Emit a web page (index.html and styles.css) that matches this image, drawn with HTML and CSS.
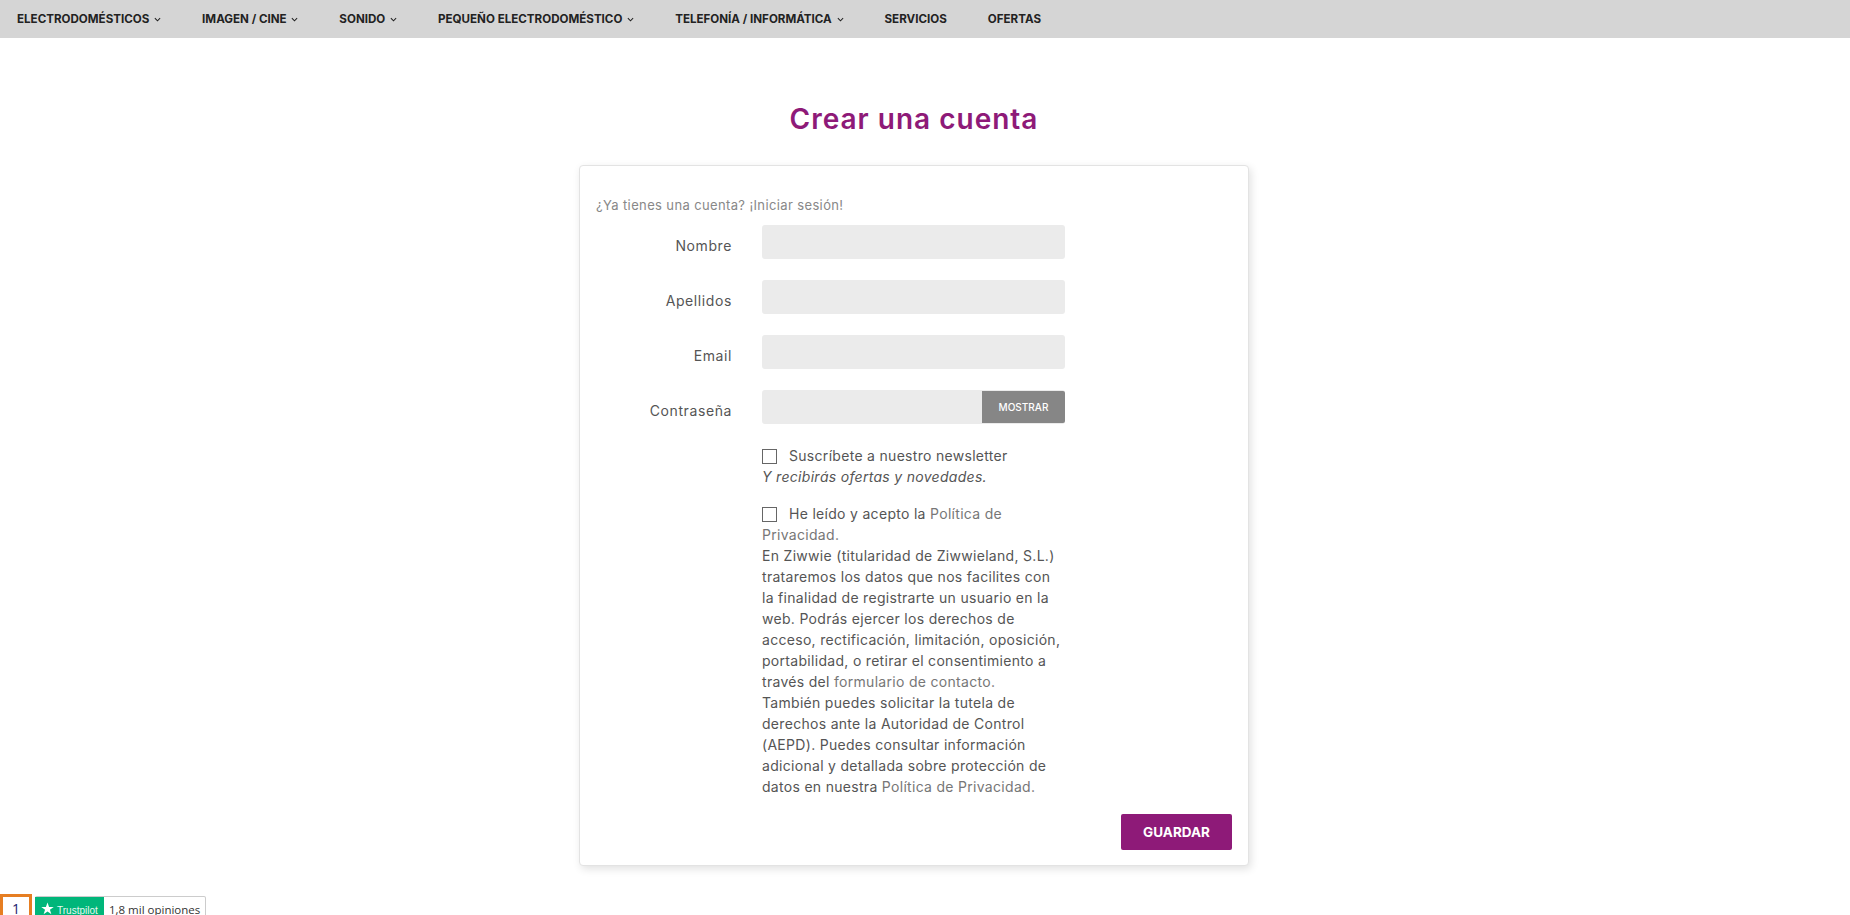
FILE: index.html
```html
<!DOCTYPE html>
<html lang="es">

<head>
    <meta charset="UTF-8">
    <meta name="viewport" content="width=device-width, initial-scale=1.0">
    <title>Crear una cuenta</title>
    <link rel="stylesheet" href="styles.css">
</head>

<body>
    <nav class="topnav">
        <a class="nav-item">ELECTRODOMÉSTICOS <svg class="chev" viewBox="0 0 8 5"><path d="M1 1l3 3 3-3" /></svg></a>
        <a class="nav-item">IMAGEN / CINE <svg class="chev" viewBox="0 0 8 5"><path d="M1 1l3 3 3-3" /></svg></a>
        <a class="nav-item">SONIDO <svg class="chev" viewBox="0 0 8 5"><path d="M1 1l3 3 3-3" /></svg></a>
        <a class="nav-item">PEQUEÑO ELECTRODOMÉSTICO <svg class="chev" viewBox="0 0 8 5"><path d="M1 1l3 3 3-3" /></svg></a>
        <a class="nav-item">TELEFONÍA / INFORMÁTICA <svg class="chev" viewBox="0 0 8 5"><path d="M1 1l3 3 3-3" /></svg></a>
        <a class="nav-item">SERVICIOS</a>
        <a class="nav-item">OFERTAS</a>
    </nav>

    <main class="page">
        <h1 class="title">Crear una cuenta</h1>

        <section class="card">
            <p class="login-link">¿Ya tienes una cuenta? ¡Iniciar sesión!</p>

            <div class="form-row">
                <label class="form-label" for="nombre">Nombre</label>
                <input class="form-input" type="text" id="nombre">
            </div>
            <div class="form-row">
                <label class="form-label" for="apellidos">Apellidos</label>
                <input class="form-input" type="text" id="apellidos">
            </div>
            <div class="form-row">
                <label class="form-label" for="email">Email</label>
                <input class="form-input" type="text" id="email">
            </div>
            <div class="form-row">
                <label class="form-label" for="password">Contraseña</label>
                <div class="password-box">
                    <input class="form-input" type="password" id="password">
                    <button class="show-btn" type="button">MOSTRAR</button>
                </div>
            </div>

            <div class="check-block news-block">
                <div><span class="check-box"></span>Suscríbete a nuestro newsletter</div>
                <em>Y recibirás ofertas y novedades.</em>
            </div>

            <div class="check-block">
                <div><span class="check-box"></span>He leído y acepto la <a class="soft-link">Política de<br>Privacidad.</a></div>
                En Ziwwie (titularidad de Ziwwieland, S.L.)<br>
                trataremos los datos que nos facilites con<br>
                la finalidad de registrarte un usuario en la<br>
                web. Podrás ejercer los derechos de<br>
                acceso, rectificación, limitación, oposición,<br>
                portabilidad, o retirar el consentimiento a<br>
                través del <a class="soft-link">formulario de contacto.</a><br>
                También puedes solicitar la tutela de<br>
                derechos ante la Autoridad de Control<br>
                (AEPD). Puedes consultar información<br>
                adicional y detallada sobre protección de<br>
                datos en nuestra <a class="soft-link">Política de Privacidad.</a>
            </div>

            <div class="card-foot">
                <button class="save-btn" type="button">GUARDAR</button>
            </div>
        </section>
    </main>

    <div class="bottom-row">
        <div class="focus-box">1</div>
        <div class="tp-badge">
            <div class="tp-logo">
                <svg class="tp-star" viewBox="0 0 24 24"><path d="M12 1l2.9 8.2h8.6l-7 5.1 2.7 8.3-7.2-5.1-7.2 5.1 2.7-8.3-7-5.1h8.6z" /></svg>
                Trustpilot
            </div>
            <div class="tp-count">1,8 mil opiniones</div>
        </div>
    </div>
</body>

</html>
```

FILE: styles.css
```css
html, body {
    height: 915px;
    overflow: hidden;
}

body {
    margin: 0;
    padding: 0;
    background-color: #fff;
    font-family: Inter, "Liberation Sans", sans-serif;
    font-size: 14px;
    color: #555;
}

.topnav {
    display: flex;
    align-items: center;
    height: 38px;
    padding-left: 17px;
    gap: 41px;
    background-color: #d5d5d5;
}

.nav-item {
    font-size: 11.6px;
    font-weight: 700;
    color: #222;
    white-space: nowrap;
}

.chev {
    width: 7px;
    height: 5px;
    margin-left: 2px;
    vertical-align: 1px;
    fill: none;
    stroke: #222;
    stroke-width: 1.2;
}

.page {
    display: flex;
    flex-direction: column;
    align-items: center;
    width: 1828px;
}

.title {
    margin: 0;
    padding-top: 61px;
    height: 66px;
    font-size: 28px;
    line-height: 40px;
    font-weight: 600;
    letter-spacing: 1px;
    color: #8e1a78;
}

.card {
    box-sizing: border-box;
    width: 670px;
    height: 701px;
    padding: 0 16px;
    background-color: #fff;
    border: 1px solid #e3e3e3;
    border-radius: 4px;
    box-shadow: 2px 3px 8px rgba(0, 0, 0, 0.12);
}

.login-link {
    margin: 0;
    padding-top: 29px;
    height: 30px;
    line-height: 20px;
    font-size: 13px;
    letter-spacing: 0.37px;
    color: #888;
}

.form-row {
    display: flex;
    height: 34px;
    margin-bottom: 21px;
}

.form-label {
    width: 136px;
    padding-top: 11px;
    line-height: 20px;
    text-align: right;
    letter-spacing: 0.6px;
    color: #555;
}

.form-input {
    box-sizing: border-box;
    width: 303px;
    height: 34px;
    margin: 0 0 0 30px;
    padding: 0 10px;
    background-color: #ebebeb;
    border: 0;
    border-radius: 3px;
}

.password-box {
    display: flex;
    position: relative;
}

.show-btn {
    position: absolute;
    top: 1px;
    right: 0;
    width: 83px;
    height: 32px;
    padding: 0;
    border: 0;
    border-radius: 0 2px 2px 0;
    background-color: #868686;
    color: #fff;
    font-family: inherit;
    font-size: 10px;
    font-weight: 500;
}

.check-block {
    margin-left: 166px;
    line-height: 21px;
    letter-spacing: 0.3px;
    color: #555;
    white-space: nowrap;
}

.news-block {
    margin-top: 21px;
    margin-bottom: 16px;
}

.check-box {
    display: inline-block;
    box-sizing: border-box;
    width: 15px;
    height: 15px;
    margin-right: 12px;
    vertical-align: -3px;
    background-color: #fff;
    border: 1px solid #666;
}

.soft-link {
    color: #777;
}

.card-foot {
    display: flex;
    justify-content: flex-end;
    margin-top: 17px;
}

.save-btn {
    width: 111px;
    height: 36px;
    border: 0;
    border-radius: 2px;
    background-color: #8e1a78;
    color: #fff;
    font-family: inherit;
    font-size: 13.5px;
    font-weight: 700;
}

.bottom-row {
    display: flex;
    align-items: flex-start;
    margin-top: 28px;
}

.focus-box {
    box-sizing: border-box;
    width: 32px;
    height: 40px;
    padding-top: 5px;
    border: 3px solid #e67e22;
    color: #1a1a6e;
    text-align: center;
    font-family: "Open Sans", sans-serif;
    font-size: 14px;
    line-height: 13px;
}

.tp-badge {
    display: flex;
    height: 36px;
    margin: 2px 0 0 3px;
    border: 1px solid #ccc;
    border-left: 0;
    border-radius: 2px;
    font-family: "Open Sans", sans-serif;
}

.tp-logo {
    display: flex;
    align-items: flex-start;
    box-sizing: border-box;
    width: 69px;
    padding: 5px 0 0 6px;
    background-color: #00b67a;
    color: #e6f8f1;
    font-family: "Liberation Sans", sans-serif;
    font-size: 10px;
    line-height: 18px;
}

.tp-star {
    width: 13px;
    height: 13px;
    margin-right: 3px;
    fill: #fff;
}

.tp-count {
    padding: 3px 5px 0 5px;
    font-size: 11.5px;
    line-height: 20px;
    color: #333;
}
```
